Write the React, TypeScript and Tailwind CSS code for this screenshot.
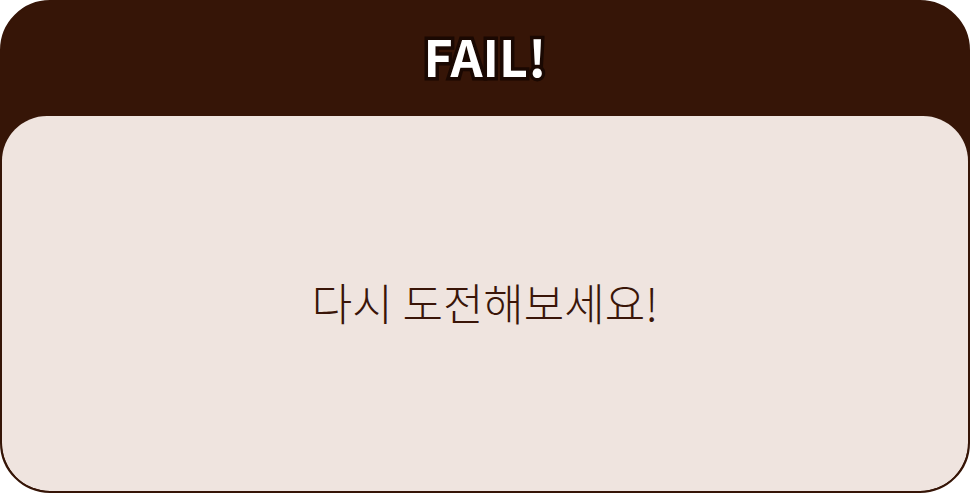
export default function App() {
  return (
    <main className="w-[970px] h-[493px] bg-white">
      <div className="flex h-full w-full flex-col overflow-hidden rounded-[50px] border-2 border-[#361507] bg-[#361507]">
        {/* header */}
        <div className="flex h-[114px] shrink-0 items-center justify-center pb-2">
          <h1 className="font-['Noto_Sans_CJK_KR',sans-serif] text-[50px] font-bold leading-none text-white [-webkit-text-stroke:7px_#1a0802] [paint-order:stroke_fill]">
            FAIL!
          </h1>
        </div>

        {/* body */}
        <div className="flex flex-1 items-center justify-center rounded-t-[45px] rounded-b-[48px] bg-[#efe4df] pb-1">
          <p className="font-['Noto_Sans_CJK_KR',sans-serif] text-[44px] font-light text-[#3a1508]">
            다시 도전해보세요!
          </p>
        </div>
      </div>
    </main>
  );
}
